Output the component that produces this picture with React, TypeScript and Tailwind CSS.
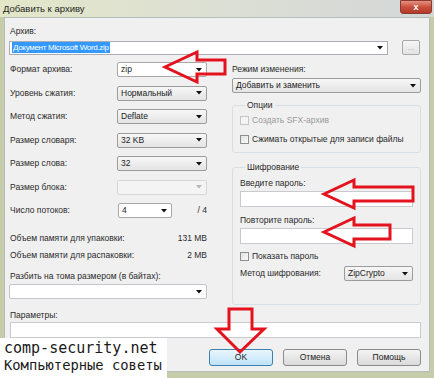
import React from "react";

const Arrow = ({ disabled }: { disabled?: boolean }) => (
  <svg width="6" height="4" viewBox="0 0 6 4" className="shrink-0">
    <polygon points="0,0 6,0 3,3.5" fill={disabled ? "#b8b8b8" : "#111"} />
  </svg>
);

const Combo = ({
  value,
  className = "",
  disabled,
  white,
}: {
  value?: string;
  className?: string;
  disabled?: boolean;
  white?: boolean;
}) => (
  <div
    className={`h-[15px] flex items-center justify-between pl-[3px] pr-[4px] rounded-[2px] border ${
      disabled
        ? "border-[#d6d6d6] bg-[#f4f4f4]"
        : white
        ? "border-[#a8a8a8] bg-white"
        : "border-[#9c9c9c] bg-gradient-to-b from-[#f7f7f7] to-[#e4e4e4]"
    } ${className}`}
  >
    <span className="text-[#1c1c1c] leading-[13px]">{value}</span>
    <Arrow disabled={disabled} />
  </div>
);

const Check = ({ label, disabled }: { label: string; disabled?: boolean }) => (
  <div className="flex items-center h-[11px] gap-[3px]">
    <div
      className={`w-[9px] h-[9px] border ${
        disabled ? "border-[#c4c4c4] bg-[#f4f4f4]" : "border-[#8e8f8f] bg-gradient-to-br from-[#e2e2e2] to-[#fafafa]"
      }`}
    />
    <span className={disabled ? "text-[#9a9a9a]" : "text-[#2a2a2a]"}>{label}</span>
  </div>
);

const Button = ({ label, focused }: { label: string; focused?: boolean }) => (
  <div
    className={`w-[64px] h-[17px] flex items-center justify-center rounded-[3px] border ${
      focused
        ? "border-[#3c7fb1] bg-gradient-to-b from-[#eaf6fd] to-[#bfe3f8]"
        : "border-[#8a8a8a] bg-gradient-to-b from-[#f4f4f4] to-[#dadada]"
    } text-[#222]`}
  >
    {label}
  </div>
);

const Row = ({ label, children }: { label: string; children: React.ReactNode }) => (
  <div className="h-[15px] flex items-center justify-between">
    <span className="pl-[1px] text-[#2a2a2a]">{label}</span>
    {children}
  </div>
);

export default function App() {
  return (
    <div className="w-[434px] h-[378px] relative overflow-hidden bg-[#c6ccaa] font-['Liberation_Sans',sans-serif] text-[8.5px] leading-[11px]">
      {/* title bar */}
      <div className="h-[17px] flex items-start bg-gradient-to-r from-[#e3e7c8] via-[#dcdfd4] to-[#d3d7d8] pl-[3px] pr-[2px]">
        <span className="text-[9.5px] leading-[17px] text-[#1e1e1e]">Добавить к архиву</span>
        <div className="ml-auto w-[32px] h-[14px] rounded-b-[3px] border border-[#8a3a30] bg-gradient-to-b from-[#e4907f] via-[#c9503d] to-[#b33a28] flex items-center justify-center text-white text-[9px] font-bold leading-none">
          x
        </div>
      </div>

      {/* body */}
      <div className="mx-[4px] h-[355px] border border-[#b7bdbd] bg-[#f0f0f0] pl-[4px] pr-[8px] pt-[8px]">
        <div className="text-[#2a2a2a] pl-[1px]">Архив:</div>
        <div className="mt-[3px] flex items-center justify-between">
          <div className="w-[379px] h-[14px] border border-[#abadb3] bg-white flex items-center justify-between pl-[2px] pr-[4px]">
            <span className="bg-[#3399ff] text-white text-[8px] tracking-[-0.3px] leading-[11px] px-[1px]">
              Документ Microsoft Word.zip
            </span>
            <Arrow />
          </div>
          <div className="w-[18px] h-[15px] mr-[1px] rounded-[2px] border border-[#a9a9a9] bg-gradient-to-b from-[#f6f6f6] to-[#e2e2e2] flex items-center justify-center text-[#999] text-[7px] leading-none">
            ...
          </div>
        </div>

        <div className="mt-[7px] flex gap-[25px]">
          {/* left column */}
          <div className="w-[198px] flex flex-col">
            <div className="flex flex-col gap-[8.5px]">
              <Row label="Формат архива:">
                <Combo value="zip" white className="w-[90px]" />
              </Row>
              <Row label="Уровень сжатия:">
                <Combo value="Нормальный" className="w-[90px]" />
              </Row>
              <Row label="Метод сжатия:">
                <Combo value="Deflate" className="w-[90px]" />
              </Row>
              <Row label="Размер словаря:">
                <Combo value="32 KB" className="w-[90px]" />
              </Row>
              <Row label="Размер слова:">
                <Combo value="32" className="w-[90px]" />
              </Row>
              <Row label="Размер блока:">
                <Combo disabled className="w-[90px]" />
              </Row>
              <div className="h-[15px] flex items-center">
                <span className="pl-[1px] w-[109px] text-[#2a2a2a]">Число потоков:</span>
                <Combo value="4" white className="w-[54px] border-[#6f6f6f]" />
                <span className="ml-auto text-[#2a2a2a]">/ 4</span>
              </div>
            </div>
            <div className="mt-[14.5px] flex justify-between text-[#2a2a2a] pl-[1px]">
              <span>Объем памяти для упаковки:</span>
              <span>131 MB</span>
            </div>
            <div className="mt-[6px] flex justify-between text-[#2a2a2a] pl-[1px]">
              <span>Объем памяти для распаковки:</span>
              <span>2 MB</span>
            </div>
            <div className="mt-[10px] pl-[1px] text-[#2a2a2a]">Разбить на тома размером (в байтах):</div>
            <Combo white className="mt-[2.5px] w-[198px] border-[#c4c6cb]" />
          </div>

          {/* right column */}
          <div className="w-[189px] flex flex-col">
            <div className="mt-[1.5px] text-[#2a2a2a]">Режим изменения:</div>
            <Combo value="Добавить и заменить" className="mt-[3.5px] w-[189px]" />

            <fieldset className="mt-[6.5px] border border-[#d5dfe5] rounded-[3px] pl-[7px] pr-[7px] pb-[7px]">
              <legend className="ml-[5px] px-[2px] text-[#2a2a2a]">Опции</legend>
              <div className="mt-[4px]">
                <Check label="Создать SFX-архив" disabled />
              </div>
              <div className="mt-[8px]">
                <Check label="Сжимать открытые для записи файлы" />
              </div>
            </fieldset>

            <fieldset className="mt-[9px] border border-[#d5dfe5] rounded-[3px] pl-[7px] pr-[7px] pb-[23px]">
              <legend className="ml-[5px] px-[2px] text-[#2a2a2a]">Шифрование</legend>
              <div className="mt-[5px] text-[#2a2a2a]">Введите пароль:</div>
              <div className="mt-[2.5px] h-[16px] border border-[#c9cbd0] bg-white" />
              <div className="mt-[7.5px] text-[#2a2a2a]">Повторите пароль:</div>
              <div className="mt-[2.5px] h-[16px] border border-[#c9cbd0] bg-white" />
              <div className="mt-[6.5px]">
                <Check label="Показать пароль" />
              </div>
              <div className="mt-[4.5px] h-[15px] flex items-center justify-between">
                <span className="text-[#2a2a2a]">Метод шифрования:</span>
                <Combo value="ZipCrypto" className="w-[69px]" />
              </div>
            </fieldset>
          </div>
        </div>

        <div className="mt-[4.5px] pl-[1px] text-[#2a2a2a]">Параметры:</div>
        <div className="mt-[1.5px] ml-[1px] h-[16px] border border-[#c9cbd0] bg-white" />

        <div className="mt-[11px] flex justify-end gap-[10px]">
          <Button label="OK" focused />
          <Button label="Отмена" />
          <Button label="Помощь" />
        </div>
      </div>

      {/* watermark */}
      <div className="absolute left-0 top-[338px] w-[167px] h-[40px] bg-white pl-[4px] pt-[2px] font-['DejaVu_Sans_Mono',monospace] text-[#1a1a1a] whitespace-nowrap">
        <div className="text-[15px] leading-[17px]">comp-security.net</div>
        <div className="text-[13.8px] leading-[16px]">Компьютерные советы</div>
      </div>

      {/* red arrows */}
      <svg className="absolute left-0 top-0 pointer-events-none" width="434" height="378" viewBox="0 0 434 378">
        <g fill="none" stroke="#e3121c" strokeWidth="3" strokeLinejoin="miter">
          <polygon points="165,67 197,52 197,60 225,60 225,74 197,74 197,82" />
          <polygon points="324,194 354,180 354,187 413,187 413,201 354,201 354,208" />
          <polygon points="324,232 354,218 354,225 390,225 390,239 354,239 354,246" />
          <polygon points="229,309 252,309 252,329 264,329 240,352 217,329 229,329" />
        </g>
      </svg>
    </div>
  );
}
